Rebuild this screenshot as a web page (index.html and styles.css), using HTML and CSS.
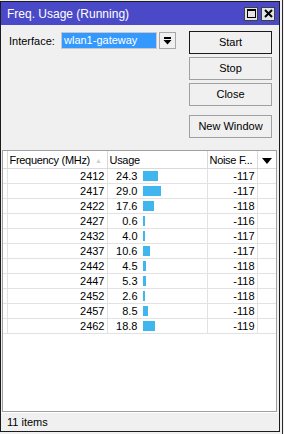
FILE: index.html
```html
<!DOCTYPE html>
<html lang="en">
<head>
  <meta charset="UTF-8" />
  <title>Freq. Usage</title>
  <link rel="stylesheet" href="styles.css">
</head>
<body>
  <div class="window">
    <div class="titlebar">
      <span class="title">Freq. Usage (Running)</span>
      <span class="tbtn">
        <svg width="9" height="9" viewBox="0 0 9 9"><rect x="0.5" y="0.5" width="8" height="8" fill="none" stroke="#000"/><rect x="0" y="0" width="9" height="2" fill="#000"/></svg>
      </span>
      <span class="tbtn">
        <svg width="9" height="9" viewBox="0 0 9 9"><path d="M1 1 L8 8 M8 1 L1 8" stroke="#000" stroke-width="2"/></svg>
      </span>
    </div>

    <div class="top">
      <div class="form">
        <label>Interface:</label>
        <div class="select">wlan1-gateway</div>
        <div class="drop">
          <svg width="9" height="8" viewBox="0 0 9 8"><rect x="1" y="0" width="7" height="2" fill="#000"/><path d="M0.5 3 H8.5 L4.5 7.5 Z" fill="#000"/></svg>
        </div>
      </div>
      <div class="buttons">
        <div class="btn default">Start</div>
        <div class="btn">Stop</div>
        <div class="btn">Close</div>
        <div class="btn spaced">New Window</div>
      </div>
    </div>

    <div class="list">
      <table>
        <colgroup>
          <col class="c-flag"><col class="c-freq"><col class="c-usage"><col class="c-noise"><col class="c-menu">
        </colgroup>
        <thead>
          <tr>
            <th></th>
            <th class="left">Frequency (MHz)<span class="sort">&#9650;</span></th>
            <th class="left">Usage</th>
            <th class="left">Noise F...</th>
            <th class="menu"><svg width="10" height="6" viewBox="0 0 10 6"><path d="M0 0 H10 L5 6 Z" fill="#000"/></svg></th>
          </tr>
        </thead>
        <tbody id="rows"></tbody>
      </table>
    </div>

    <div class="status">11 items</div>
  </div>
  <div class="behind"></div>

  <script>
    const data = [
      [2412, 24.3, -117], [2417, 29.0, -117], [2422, 17.6, -118],
      [2427, 0.6, -116], [2432, 4.0, -117], [2437, 10.6, -117],
      [2442, 4.5, -118], [2447, 5.3, -118], [2452, 2.6, -118],
      [2457, 8.5, -118], [2462, 18.8, -119]
    ];
    const tbody = document.getElementById('rows');
    data.forEach(([f, u, n]) => {
      const tr = document.createElement('tr');
      const w = Math.max(2, Math.round(u * 0.62));
      tr.innerHTML =
        '<td></td>' +
        '<td class="num">' + f + '</td>' +
        '<td><span class="val">' + u.toFixed(1) + '</span><span class="bar" style="width:' + w + 'px"></span></td>' +
        '<td class="num">' + n + '</td>' +
        '<td></td>';
      tbody.appendChild(tr);
    });
  </script>
</body>
</html>
```

FILE: styles.css
```css
body {
  margin: 0;
  background: #f0f0f0;
  font-family: 'Liberation Sans', Arial, sans-serif;
  font-size: 11px;
  color: #000;
  display: flex;
  align-items: flex-start;
}

.window {
  margin-top: 1px;
  width: 278px;
  height: 429px;
  border: 1px solid #1c1c1c;
  background: #f0f0f0;
  display: flex;
  flex-direction: column;
}

.behind {
  margin-left: 2px;
  width: 1px;
  height: 434px;
  background: #2a2a2a;
}

.titlebar {
  height: 23px;
  background: #4a4ac8;
  display: flex;
  align-items: center;
  padding: 0 4px 0 6px;
  gap: 3px;
}

.title {
  color: #fff;
  font-size: 12px;
  flex: 1;
  margin-top: 1px;
}

.tbtn {
  width: 12px;
  height: 12px;
  background: #e4e4e4;
  border: 1px solid #404040;
  display: flex;
  align-items: center;
  justify-content: center;
}

.top {
  height: 125px;
  display: flex;
}

.form {
  flex: 1;
  display: flex;
  align-items: center;
  padding: 7px 0 0 8px;
  height: 17px;
}

.form label {
  width: 52px;
}

.select {
  height: 15px;
  line-height: 15px;
  background: #3399ff;
  color: #fff;
  border: 1px solid #c8c8c8;
  padding-left: 2px;
  width: 92px;
}

.drop {
  margin-left: 2px;
  width: 15px;
  height: 15px;
  border: 1px solid #a8a8a8;
  background: #f0f0f0;
  display: flex;
  align-items: center;
  justify-content: center;
}

.buttons {
  width: 83px;
  margin: 6px 7px 0 0;
  display: flex;
  flex-direction: column;
  gap: 3px;
}

.btn {
  height: 21px;
  line-height: 21px;
  border: 1px solid #a0a0a0;
  text-align: center;
  background: #f0f0f0;
}

.btn.default {
  border-color: #1a1a1a;
}

.btn.spaced {
  margin-top: 6px;
}

.list {
  margin: 0 2px 0 1px;
  height: 260px;
  border: 1px solid #a0a0a0;
  background: #fff;
}

table {
  border-collapse: collapse;
  table-layout: fixed;
  width: 273px;
}

.c-flag { width: 4px; }
.c-freq { width: 100px; }
.c-usage { width: 100px; }
.c-noise { width: 50px; }
.c-menu { width: 19px; }

th {
  height: 17px;
  font-weight: normal;
  letter-spacing: -0.3px;
  border-right: 1px solid #dadada;
  border-bottom: 1px solid #dadada;
  padding: 0 2px;
  white-space: nowrap;
  overflow: hidden;
}

th.left { text-align: left; }
th.menu { text-align: center; border-right: none; }

.sort {
  color: #d0d0d0;
  font-size: 7px;
  margin-left: 5px;
  vertical-align: 1px;
}

td {
  height: 14px;
  padding: 0 2px;
  border-right: 1px solid #e2e2e2;
  border-bottom: 1px solid #e2e2e2;
  white-space: nowrap;
}

td:last-child { border-right: none; }

td.num { text-align: right; }

.val {
  display: inline-block;
  width: 28px;
  text-align: right;
}

.bar {
  display: inline-block;
  height: 10px;
  margin-left: 5px;
  background: #3fb6ee;
  vertical-align: -1px;
}

.status {
  flex: 1;
  padding-left: 6px;
  display: flex;
  align-items: center;
  border-top: 1px solid #fff;
}
```
